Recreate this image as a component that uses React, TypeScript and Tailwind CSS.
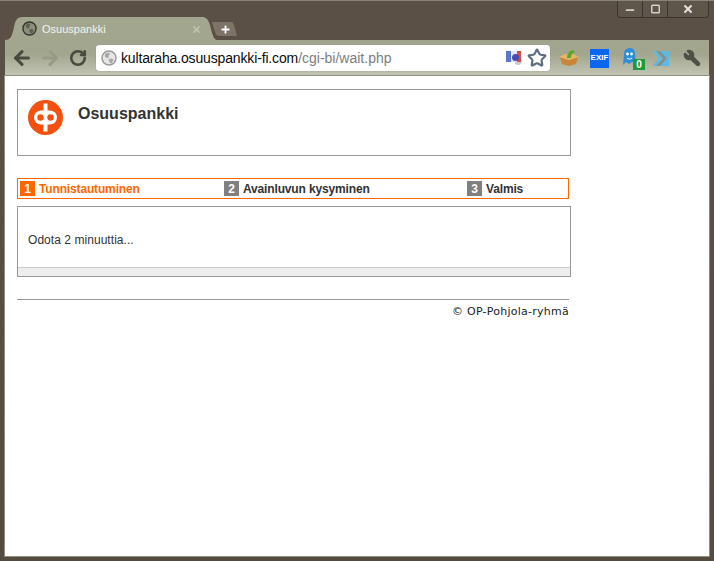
import { ArrowLeft, ArrowRight, RotateCw, Star, Plus, X, Minus, Square, Wrench } from "lucide-react";

const FONT = "font-['Liberation_Sans',Arial,sans-serif]";

function GlobeIcon({ ring, sea, land, className }: { ring: string; sea: string; land: string; className: string }) {
  return (
    <svg className={className} viewBox="0 0 16 16">
      <circle cx="8" cy="8" r="7" fill={sea} stroke={ring} strokeWidth="1.5" />
      <path d="M4 4 L7.5 2.5 L9 4 L7.5 6 L8 7.5 L5.5 8 L4 6.5 Z" fill={land} />
      <path d="M7.5 9 L11 8.5 L12.5 10 L10.5 13.5 L8.5 12.5 Z" fill={land} />
    </svg>
  );
}

function TabStrip() {
  return (
    <div className="relative h-[36px] shrink-0">
      <svg className="absolute left-0 top-[12px]" width="240" height="24" viewBox="0 0 240 24">
        <path d="M0 24 C6 24 7 20 9 11 C10.5 4 12 1 18 1 L197 1 C201 1 203 3 205 9 C207 18 209 24 212 24 Z" fill="#a3a68f" />
        <path d="M207 6 L226 6 C228 6 228.5 7 229 9 L232 20 L214 20 C211 20 210 17 207 6 Z" fill="#7d7366" />
      </svg>
      <GlobeIcon ring="#33362c" sea="#8c907b" land="#5c6052" className="absolute left-[17px] top-[17px] h-[15px] w-[15px]" />
      <span className={`absolute left-[37px] top-[18px] text-[11px] leading-[14px] text-[#f4f4ea] ${FONT}`}>Osuuspankki</span>
      <X className="absolute left-[186px] top-[20px] h-[11px] w-[11px] text-[#c4c6b4]" strokeWidth={3} />
      <Plus className="absolute left-[215px] top-[20px] h-[11px] w-[11px] text-white" strokeWidth={4} />

      <div className="absolute right-0 top-[-4px] flex h-[18px] w-[92px] items-center rounded-b-[4px] border border-t-0 border-[#3b352e] bg-[#5e554b]">
        <div className="flex h-full w-[25px] items-center justify-center border-r border-[#3b352e]">
          <Minus className="mt-[3px] h-[12px] w-[12px] text-[#d3d0ca]" strokeWidth={3.5} />
        </div>
        <div className="flex h-full w-[25px] items-center justify-center border-r border-[#3b352e]">
          <Square className="h-[10px] w-[11px] text-[#d3d0ca]" strokeWidth={3.5} />
        </div>
        <div className="flex h-full flex-1 items-center justify-center">
          <X className="h-[12px] w-[12px] text-[#e4e2de]" strokeWidth={4} />
        </div>
      </div>
    </div>
  );
}

function Toolbar() {
  return (
    <div className="flex h-[36px] shrink-0 items-center bg-gradient-to-b from-[#a3a68f] from-40% to-[#c4c6b6] pl-[6px]">
      <ArrowLeft className="h-[22px] w-[22px] text-[#4a4b40]" strokeWidth={3.4} />
      <ArrowRight className="ml-[6px] h-[22px] w-[22px] text-[#989b88]" strokeWidth={3.4} />
      <RotateCw className="ml-[8px] h-[18px] w-[18px] text-[#4a4b40]" strokeWidth={3.5} />
      <div className="ml-[9px] flex h-[26px] w-[454px] items-center rounded-[3px] bg-white pl-[5px] pr-[3px] shadow-[0_0_1px_#6b6d5c]">
        <GlobeIcon ring="#9a9a9a" sea="#e6e6e6" land="#a8a8a8" className="h-[16px] w-[16px]" />
        <span className={`ml-[4px] whitespace-nowrap text-[14px] leading-none tracking-[-0.15px] text-[#0a0a0a] ${FONT}`}>
          kultaraha.osuuspankki-fi.com<span className="tracking-normal text-[#7d7d7d]">/cgi-bi/wait.php</span>
        </span>
        <svg className="ml-auto" width="16" height="14" viewBox="0 0 16 14">
          <circle cx="12" cy="10.5" r="3.5" fill="#c9c9c9" />
          <rect x="0" y="0" width="5" height="11" fill="#5a78c8" />
          <rect x="5" y="0" width="6" height="11" fill="#e6e9f4" />
          <rect x="11" y="0" width="4" height="11" fill="#d84a4a" />
          <circle cx="9.5" cy="6.5" r="3.5" fill="#4b4ba8" />
        </svg>
        <Star className="ml-[5px] h-[20px] w-[20px] text-[#5f6d80]" strokeWidth={2.6} />
      </div>
      <svg className="ml-[9px]" width="20" height="18" viewBox="0 0 20 18">
        <path d="M1 8 L10 11 L19 8 L17 15 L10 17 L3 15 Z" fill="#c8863a" />
        <path d="M0 8 L6 5 L14 5 L20 8 L10 11 Z" fill="#e6b566" />
        <path d="M8 9 C8 5 10 2 14 1 L16 3 C13 4 12 6 12 9 Z" fill="#5aa52e" />
      </svg>
      <div className={`ml-[11px] flex h-[19px] w-[19px] items-center justify-center bg-[#0a66ee] text-[8px] font-bold leading-none text-white ${FONT}`}>EXIF</div>
      <div className="relative ml-[14px] mt-[3px] h-[23px] w-[22px]">
        <svg width="13" height="17" viewBox="0 0 13 17" className="absolute left-0 top-0">
          <path d="M0 17 L1 6 C1 2 4 0 7 0 C10 0 12 2 12 6 L13 15 L9 14 L6 16 L3 14 Z" fill="#2e8fd8" />
          <circle cx="4.5" cy="6" r="1.4" fill="#fff" />
          <circle cx="8.5" cy="6" r="1.4" fill="#fff" />
          <path d="M4 10 C5.5 11.5 7.5 11.5 9 10" fill="none" stroke="#fff" strokeWidth="1" />
        </svg>
        <div className={`absolute left-[10px] top-[11px] flex h-[11px] w-[12px] items-center justify-center bg-[#1e9a3a] text-[10px] font-bold leading-none text-white ${FONT}`}>0</div>
      </div>
      <svg className="ml-[8px]" width="16" height="15" viewBox="0 0 16 15">
        <rect width="16" height="15" fill="#5bbbe8" />
        <path d="M0 0 L6 7.5 L0 15 Z" fill="#a8ab96" />
        <path d="M3 0 L7 0 L14 7.5 L7 15 L3 15 L10 7.5 Z" fill="#8a8f86" />
      </svg>
      <Wrench className="ml-[14px] h-[18px] w-[18px] scale-x-[-1] text-[#4f5046]" fill="currentColor" strokeWidth={2} />
    </div>
  );
}

function Step({ n, label, active, className }: { n: number; label: string; active?: boolean; className: string }) {
  return (
    <div className={`flex items-center ${className}`}>
      <span className={`flex h-[15px] w-[15px] items-center justify-center text-[12px] font-bold leading-none text-white ${active ? "bg-[#ff6600]" : "bg-[#808080]"}`}>{n}</span>
      <span className={`ml-[4px] text-[12px] font-bold leading-none tracking-[-0.15px] ${active ? "text-[#ff6600]" : "text-[#333333]"}`}>{label}</span>
    </div>
  );
}

export default function App() {
  return (
    <div className={`flex h-[561px] w-[714px] flex-col overflow-hidden border-t border-[#8a8378] bg-gradient-to-b from-[#5a5046] to-[#544b41] px-[5px] pb-[5px] pt-[3px] ${FONT}`}>
      <TabStrip />
      <Toolbar />
      <div className="flex-1 bg-white pl-[12px] pr-[138px] pt-[13px] shadow-[0_0_0_1px_#8d9080]">
        <div className="flex h-[67px] items-start border border-[#999999] pl-[10px] pt-[10px]">
          <svg width="35" height="35" viewBox="0 0 35 35">
            <circle cx="17.5" cy="17.5" r="17.5" fill="#f4500f" />
            <rect x="15.5" y="3.5" width="4" height="28" fill="#fff" />
            <rect x="6" y="10.5" width="23" height="14" rx="7" fill="#fff" />
            <circle cx="12.5" cy="17.5" r="3.2" fill="#f4500f" />
            <circle cx="22.5" cy="17.5" r="3.2" fill="#f4500f" />
          </svg>
          <h1 className="ml-[15px] mt-[5px] text-[16px] font-bold leading-[18px] text-[#333333]">Osuuspankki</h1>
        </div>

        <div className="mt-[22px] flex h-[21px] w-[552px] items-center border border-[#ff6600] pl-[2px]">
          <Step n={1} label="Tunnistautuminen" active className="w-[204px]" />
          <Step n={2} label="Avainluvun kysyminen" className="w-[243px]" />
          <Step n={3} label="Valmis" className="" />
        </div>

        <div className="mt-[7px] flex h-[71px] flex-col border border-[#999999]">
          <p className="flex-1 pl-[10px] pt-[26px] text-[12px] leading-[14px] tracking-[0.05px] text-[#333333]">Odota 2 minuuttia...</p>
          <div className="h-[9px] border-t border-[#cccccc] bg-[#eeeeee]" />
        </div>

        <div className="mt-[22px] w-[552px] border-t border-[#999999] pt-[6px] text-right font-['DejaVu_Sans',Verdana,sans-serif] text-[11px] leading-[12px] tracking-[0.25px] text-[#222222]">
          © OP-Pohjola-ryhmä
        </div>
      </div>
    </div>
  );
}
